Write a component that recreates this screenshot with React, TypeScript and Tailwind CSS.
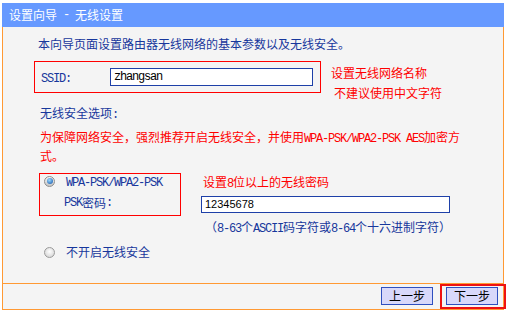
import React from 'react';

// half-width ASCII, like the bitmap SimSun latin glyphs
const A: React.FC<{ children: React.ReactNode }> = ({ children }) => (
  <span className="font-['Liberation_Mono',monospace] text-[12px] tracking-[-1.2px] leading-[0] whitespace-pre">
    {children}
  </span>
);

const Radio: React.FC<{ checked?: boolean }> = ({ checked }) =>
  checked ? (
    <span className="w-[11px] h-[11px] shrink-0 rounded-full border border-[#8c8c8c] bg-[linear-gradient(#fafafa,#c4c4c4)] flex items-center justify-center">
      <span className="w-[6px] h-[6px] rounded-full bg-[radial-gradient(circle_at_40%_35%,#9fdcff,#0b4ea6)]" />
    </span>
  ) : (
    <span className="w-[11px] h-[11px] shrink-0 rounded-full border border-[#9a9a9a] bg-[radial-gradient(circle_at_50%_40%,#ffffff,#cdcdcd)]" />
  );

const Button: React.FC<{ children: React.ReactNode }> = ({ children }) => (
  <button
    type="button"
    className="w-[52px] h-[18px] border border-[#2f4fbf] bg-[#d8d8fa] text-black text-[12px] leading-none flex items-center justify-center"
  >
    {children}
  </button>
);

export default function App() {
  return (
    <div className="w-[510px] h-[314px] bg-white pt-[3px] pl-[2px] font-['Noto_Sans_CJK_SC',sans-serif] text-[12px]">
      <div className="w-[502px]">
        {/* title bar */}
        <div className="h-[24px] bg-[#6699ff] text-white pl-[7px] flex items-center leading-none">
          设置向导<A> - </A>无线设置
        </div>

        {/* body */}
        <div className="h-[256px] bg-[#f4f4f4] border-x border-[#ff9933] text-[#17379c] pt-[9px]">
          <p className="pl-[35px] leading-[16px]">本向导页面设置路由器无线网络的基本参数以及无线安全。</p>

          <div className="flex items-start mt-[9px] ml-[31px]">
            <div className="w-[287px] h-[32px] border border-[#ff0000] flex items-center pl-[6px]">
              <span className="w-[69px] leading-[16px]">
                <A>SSID:</A>
              </span>
              <div className="w-[203px] h-[18px] border border-[#1e40a8] bg-white pl-[3px] flex items-center text-black">
                <A>zhangsan</A>
              </div>
            </div>
            <div className="ml-[10px] mt-[2px] text-[#ff0000] leading-[20px]">
              <div>设置无线网络名称</div>
              <div className="pl-[3px]">不建议使用中文字符</div>
            </div>
          </div>

          <p className="mt-[2px] pl-[37px] leading-[16px]">
            无线安全选项<A>:</A>
          </p>

          <p className="mt-[6px] pl-[37px] leading-[19px] text-[#ff0000]">
            为保障网络安全，强烈推荐开启无线安全，并使用<A>WPA-PSK/WPA2-PSK AES</A>加密方
            <br />
            式。
          </p>

          <div className="flex items-start mt-[8px] ml-[36px]">
            <div className="w-[142px] h-[43px] border border-[#ff0000] flex flex-col">
              <div className="h-[14px] flex items-center pl-[4px]">
                <Radio checked />
                <span className="ml-[11px]">
                  <A>WPA-PSK/WPA2-PSK</A>
                </span>
              </div>
              <div className="h-[14px] mt-[8px] flex items-center pl-[24px]">
                <A>PSK</A>密码<A>:</A>
              </div>
            </div>
            <div className="ml-[20px]">
              <div className="mt-[1px] pl-[2px] leading-[16px] text-[#ff0000]">
                设置<A>8</A>位以上的无线密码
              </div>
              <div className="mt-[6px] w-[249px] h-[17px] border border-[#1e40a8] bg-white pl-[3px] flex items-center text-black font-['Liberation_Sans',sans-serif] text-[11px]">
                12345678
              </div>
              <div className="mt-[6px] pl-[4px] leading-[16px]">
                （<A>8-63</A>个<A>ASCII</A>码字符或<A>8-64</A>个十六进制字符）
              </div>
            </div>
          </div>

          <div className="mt-[9px] ml-[41px] h-[16px] flex items-center">
            <Radio />
            <span className="ml-[11px]">不开启无线安全</span>
          </div>
        </div>

        {/* footer */}
        <div className="h-[27px] bg-[#f4f4f4] border border-[#ff9933] flex justify-end items-start pt-[3px] pr-[5px] gap-[13px]">
          <Button>上一步</Button>
          <div className="relative">
            <Button>下一步</Button>
            <span className="absolute left-[-6px] top-[-3px] w-[66px] h-[25px] border-2 border-[#ee1111] pointer-events-none" />
          </div>
        </div>
      </div>
    </div>
  );
}
